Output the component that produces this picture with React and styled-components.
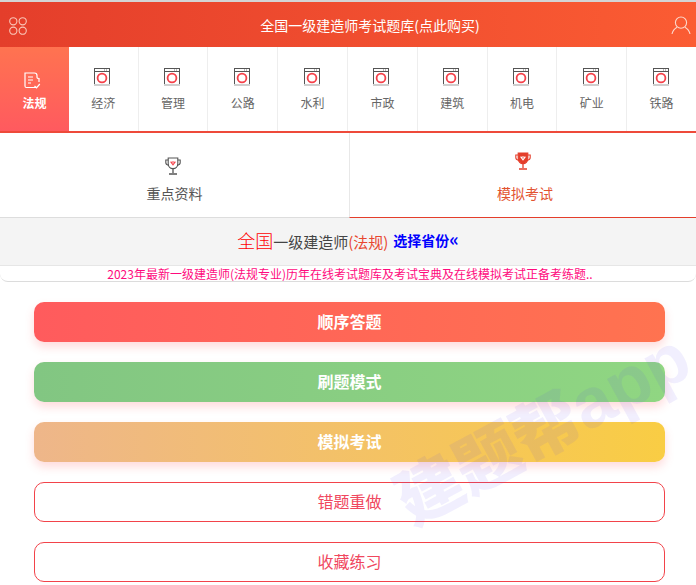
import React from "react";
import styled, { createGlobalStyle } from "styled-components";

const GlobalStyle = createGlobalStyle`
  html, body {
    margin: 0;
    padding: 0;
    background: #fff;
    overflow: hidden;
  }
  * { box-sizing: border-box; }
  body {
    font-family: "Noto Sans CJK SC", "Liberation Sans", sans-serif;
  }
`;

const Page = styled.div`
  position: relative;
  width: 696px;
  height: 585px;
  overflow: hidden;
`;

const Header = styled.div`
  display: flex;
  align-items: center;
  justify-content: space-between;
  height: 47px;
  padding: 2px 5px 0 9px;
  border-top: 2px solid #d4d4d4;
  background: linear-gradient(90deg, #e43e2b, #fb5c33);
  color: #fff;
`;

const HeaderTitle = styled.div`
  padding: 0 0 2px 42px;
  font-size: 14px;
  line-height: 20px;
`;

const CategoryBar = styled.div`
  display: flex;
  height: 86px;
  border-bottom: 2px solid #ee4a3a;
`;

const Category = styled.div`
  flex: 1 1 0;
  display: flex;
  flex-direction: column;
  align-items: center;
  padding-top: ${(props) => (props.active ? "25px" : "21px")};
  border-right: ${(props) => (props.active ? "none" : "1px solid #eeeeee")};
  background: ${(props) =>
    props.active ? "linear-gradient(180deg, #ff7350, #ff5a5f)" : "#fff"};
  color: ${(props) => (props.active ? "#fff" : "#666")};
  font-size: 12px;
  font-weight: ${(props) => (props.active ? 700 : 400)};
  line-height: 18px;

  &:last-child { border-right: none; }
`;

const CategoryIcon = styled.div`
  height: ${(props) => (props.active ? "17px" : "18px")};
  margin: ${(props) => (props.active ? "0 3px 5px 0" : "0 2px 8px 0")};
`;

const TabBar = styled.div`
  display: flex;
  height: 85px;
`;

const Tab = styled.div`
  flex: ${(props) => (props.active ? "1 1 0" : "0 0 349px")};
  display: flex;
  flex-direction: column;
  align-items: center;
  padding: ${(props) => (props.active ? "19px 0 0 4px" : "24px 0 0")};
  background: #fff;
  border-left: ${(props) => (props.active ? "1px solid #e8e8e8" : "none")};
  border-bottom: 1px solid ${(props) => (props.active ? "#e43e2b" : "#dddddd")};
  color: ${(props) => (props.active ? "#e2522f" : "#555")};
  font-size: 14px;
  line-height: 20px;
`;

const TabIcon = styled.div`
  height: 18px;
  margin: 0 4px ${(props) => (props.active ? "13px" : "8px")} 0;
`;

const Heading = styled.div`
  display: flex;
  align-items: center;
  justify-content: center;
  gap: 5px;
  height: 47px;
  padding-bottom: 3px;
  background: #f4f4f4;
  color: #444;
  font-size: 15px;
`;

const HeadingText = styled.span`
  letter-spacing: 0;
`;

const Nation = styled.span`
  color: #f00;
  font-size: 18px;
  font-weight: 300;
`;

const Specialty = styled.span`
  color: #e8472f;
`;

const ProvinceLink = styled.span`
  color: #0000ff;
  font-size: 14px;
  font-weight: 700;
`;

const ProvinceArrow = styled.span`
  font-size: 18px;
  line-height: 14px;
`;

const Notice = styled.div`
  height: 17px;
  padding-left: 4px;
  border-top: 1px solid #e6e6e6;
  border-bottom: 1px solid #dcdcdc;
  border-radius: 0 0 8px 8px;
  color: #ff0a7d;
  font-size: 12px;
  line-height: 15px;
  text-align: center;
  white-space: nowrap;
  overflow: hidden;
`;

const ActionList = styled.div`
  display: flex;
  flex-direction: column;
  gap: 20px;
  padding: 20px 31px 0 34px;
`;

const ActionButton = styled.div`
  display: flex;
  align-items: center;
  justify-content: center;
  height: 40px;
  padding-bottom: 2px;
  border-radius: 10px;
  background: ${(props) => props.$fill};
  box-shadow: 0 5px 10px rgba(255, 90, 95, 0.22);
  color: #fff;
  font-size: 16px;
  font-weight: 700;
`;

const OutlineButton = styled.div`
  display: flex;
  align-items: center;
  justify-content: center;
  height: 40px;
  padding-bottom: 2px;
  border: 1px solid #f2434a;
  border-radius: 10px;
  background: #fff;
  color: #f0475e;
  font-size: 16px;
`;

const Watermark = styled.div`
  position: absolute;
  left: 380px;
  top: 394px;
  color: rgba(90, 70, 240, 0.085);
  font-size: 66px;
  font-weight: 900;
  line-height: 60px;
  white-space: nowrap;
  transform: rotate(-28.5deg);
  transform-origin: center;
  pointer-events: none;
`;

const WatermarkLatin = styled.span`
  font-family: "Liberation Sans", sans-serif;
  font-weight: 700;
  font-size: 70px;
`;

const GridIcon = () => (
  <svg width="18" height="18" viewBox="0 0 18 18" fill="none" stroke="#f9c4b6" strokeWidth="1.1">
    <circle cx="4.3" cy="4.3" r="3.6" />
    <circle cx="13.7" cy="4.3" r="3.6" />
    <circle cx="4.3" cy="13.7" r="3.6" />
    <circle cx="13.7" cy="13.7" r="3.6" />
  </svg>
);

const UserIcon = () => (
  <svg width="20" height="19" viewBox="0 0 20 19" fill="none" stroke="#fcd7cb" strokeWidth="1.1">
    <circle cx="10" cy="6.6" r="5.6" />
    <path d="M6 11.2 C3.6 12.6 1.6 15 1 18 M14 11.2 C16.4 12.6 18.4 15 19 18" />
  </svg>
);

const WasherIcon = () => (
  <svg width="16" height="18" viewBox="0 0 16 18" fill="none">
    <rect x="0.5" y="0.5" width="15" height="16" fill="#fff" stroke="#555" />
    <path d="M0.5 3.5 H15.5" stroke="#555" />
    <path d="M10 2 H11 M12 2 H13" stroke="#777" />
    <rect x="0" y="16" width="16" height="2" fill="#cfcfcf" />
    <circle cx="8" cy="10" r="4.4" stroke="#f5414a" strokeWidth="1.8" />
  </svg>
);

const DocIcon = () => (
  <svg width="17" height="17" viewBox="0 0 17 17" fill="none" stroke="#fff" strokeWidth="1.2">
    <path d="M12 15.5 H2.5 C1.5 15.5 1 15 1 14 V1 H10.5 C12.2 1 13 2 13 3.5 V5.5 C13 6.2 13.6 6.5 15 6.5 V10" />
    <path d="M4 5 H9 M4 8 H9 M4 11 H7" />
    <path d="M10.5 14 L12.5 15.8 L15.8 12" />
  </svg>
);

const TrophyIcon = ({ solid }) => {
  const main = solid ? "#e43e2b" : "#555";
  return (
    <svg width="16" height="18" viewBox="0 0 16 18" fill="none">
      <path
        d="M3.2 1 H12.8 V6.8 C12.8 9.6 10.6 11.6 8 11.6 C5.4 11.6 3.2 9.6 3.2 6.8 Z"
        fill={solid ? main : "#fff"}
        stroke={main}
        strokeWidth="1.1"
      />
      <path
        d="M3.2 3 H0.8 V5.6 C0.8 7 1.8 8 3.6 8.4 M12.8 3 H15.2 V5.6 C15.2 7 14.2 8 12.4 8.4"
        stroke={main}
        strokeWidth="1.1"
      />
      <path d="M8 11.6 V16 M4 17 H12" stroke={main} strokeWidth="1.3" />
      <path
        d="M5.6 4.6 L8 7.8 L10.4 4.6 M6.8 5 H9.2"
        stroke={solid ? "#fff" : "#f5414a"}
        strokeWidth="1.1"
      />
    </svg>
  );
};

const categories = ["经济", "管理", "公路", "水利", "市政", "建筑", "机电", "矿业", "铁路"];

const fills = [
  { label: "顺序答题", fill: "linear-gradient(90deg, #ff5b5d, #ff7350)" },
  { label: "刷题模式", fill: "linear-gradient(90deg, #82c682, #90d682)" },
  { label: "模拟考试", fill: "linear-gradient(90deg, #eeb68a, #f9cd44)" },
];

const App = () => (
  <Page>
    <GlobalStyle />
    <Header>
      <GridIcon />
      <HeaderTitle>全国一级建造师考试题库(点此购买)</HeaderTitle>
      <UserIcon />
    </Header>
    <CategoryBar>
      <Category active>
        <CategoryIcon active>
          <DocIcon />
        </CategoryIcon>
        法规
      </Category>
      {categories.map((name) => (
        <Category key={name}>
          <CategoryIcon>
            <WasherIcon />
          </CategoryIcon>
          {name}
        </Category>
      ))}
    </CategoryBar>
    <TabBar>
      <Tab>
        <TabIcon>
          <TrophyIcon />
        </TabIcon>
        重点资料
      </Tab>
      <Tab active>
        <TabIcon active>
          <TrophyIcon solid />
        </TabIcon>
        模拟考试
      </Tab>
    </TabBar>
    <Heading>
      <HeadingText>
        <Nation>全国</Nation>一级建造师<Specialty>(法规)</Specialty>
      </HeadingText>
      <ProvinceLink>
        选择省份<ProvinceArrow>«</ProvinceArrow>
      </ProvinceLink>
    </Heading>
    <Notice>2023年最新一级建造师(法规专业)历年在线考试题库及考试宝典及在线模拟考试正备考练题..</Notice>
    <ActionList>
      {fills.map((item) => (
        <ActionButton key={item.label} $fill={item.fill}>
          {item.label}
        </ActionButton>
      ))}
      <OutlineButton>错题重做</OutlineButton>
      <OutlineButton>收藏练习</OutlineButton>
    </ActionList>
    <Watermark>
      建题帮<WatermarkLatin>app</WatermarkLatin>
    </Watermark>
  </Page>
);

export default App;
